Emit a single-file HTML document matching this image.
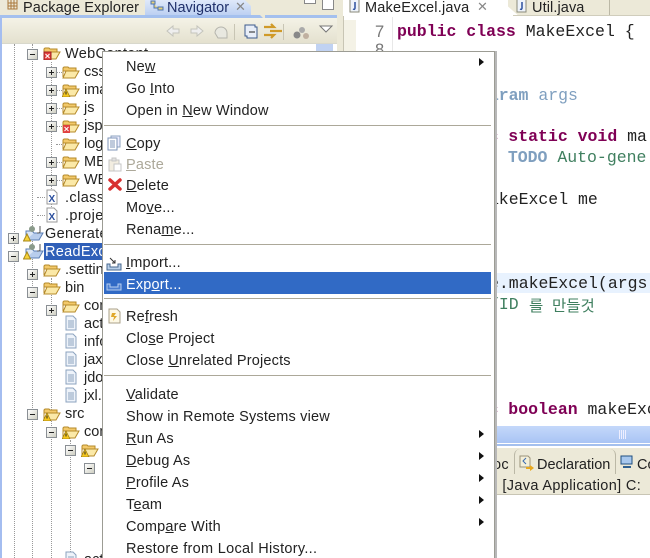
<!DOCTYPE html>
<html><head><meta charset="utf-8"><style>
html,body{margin:0;padding:0}
#p{position:relative;width:650px;height:558px;overflow:hidden;background:#fff;font-family:"Liberation Sans","Noto Sans CJK KR",sans-serif;font-size:14.5px;color:#222}
#p div,#p svg{position:absolute}
.t{white-space:nowrap;line-height:18px;height:18px;margin-top:1px}
.m{left:126px;white-space:nowrap;line-height:18px;height:18px;color:#222;letter-spacing:.18px;margin-top:1px}
.c{white-space:pre;font-family:"Liberation Mono","Noto Sans CJK KR",monospace;font-size:16.5px;line-height:20px;height:20px;color:#222;margin-top:1px}
.k{color:#7f0055;font-weight:bold}
.g{color:#3f7f5f}
.j{color:#7f9fbf}
.s{left:104px;width:387px;height:1px;background:#aca899}
.a{left:479px;width:0;height:0;border-left:5px solid #111;border-top:4px solid transparent;border-bottom:4px solid transparent}
.v{width:0;border-left:1px dotted #999}
.h{height:0;border-top:1px dotted #999}
.b{width:9px;height:9px;background:linear-gradient(135deg,#fff,#cfcfc2);border:1px solid #8a8f94}
.b:after{content:"";position:absolute;left:2px;top:4px;width:5px;height:1px;background:#222}
.b.q:before{content:"";position:absolute;left:4px;top:2px;width:1px;height:5px;background:#222}
u{text-decoration:underline}
</style></head><body><div id="p">
<svg width="0" height="0"><defs>
<symbol id="f" viewBox="0 0 18 14"><path d="M1 12V3l1-1h4l1 1h7v3H1z" fill="#f3c96a" stroke="#b58a2a"/><path d="M1 13l3-7h13l-4 7z" fill="#fbe9a8" stroke="#b58a2a"/></symbol>
<symbol id="w" viewBox="0 0 18 14"><path d="M1 12V3l1-1h4l1 1h7v3H1z" fill="#f3c96a" stroke="#b58a2a"/><path d="M1 13l3-7h13l-4 7z" fill="#fbe9a8" stroke="#b58a2a"/><path d="M4 6l4 8H0z" fill="#f6c81e" stroke="#9a7a10" stroke-width=".7"/><path d="M4 8.500v3" stroke="#222"/></symbol>
<symbol id="d" viewBox="0 0 14 16"><path d="M2 1h7l3 3v11H2z" fill="#eef3fa" stroke="#8ca3bf"/><path d="M4 6h6M4 8h6M4 10h6M4 12h6" stroke="#8ca3bf"/></symbol>
<symbol id="x" viewBox="0 0 14 16"><path d="M2 1h7l3 3v11H2z" fill="#fff" stroke="#9a9a9a"/><text x="3.500" y="13" font-size="10" font-weight="bold" fill="#2b4f9e" font-family="Liberation Sans">X</text></symbol>
<symbol id="pr" viewBox="0 0 22 18"><path d="M3 15l4-7h13l-4 7z" fill="#b8cdec" stroke="#5b7fb5"/><path d="M3 15V6h6l2 2" fill="#dbe6f5" stroke="#5b7fb5"/><circle cx="9" cy="4" r="3" fill="#8a9a8a"/><path d="M17 1v6q0 1-3 1" fill="none" stroke="#555"/><path d="M4 9l3.500 7h-7z" fill="#f6d23a" stroke="#a8891a"/></symbol>
</defs></svg>

<!-- left chrome -->
<div style="left:0;top:0;width:343px;height:15px;background:#ece9d8"></div>
<div style="left:0;top:15px;width:337px;height:3px;background:#a4c0ee"></div>
<div style="left:145px;top:0;width:106px;height:15px;background:linear-gradient(#dfe9fa,#bcd0f2)"></div>
<div style="left:245px;top:0;width:20px;height:18px;background:#ece9d8;clip-path:polygon(0 0,100% 0,100% 100%,90% 100%)"></div>
<svg style="left:7px;top:0" width="12" height="12"><path d="M1 0v9h9V0M4 0v9M7 0v9M1 3h9M1 6h9" fill="none" stroke="#a9783a"/></svg>
<div class="t" style="left:23px;top:-2px;letter-spacing:.1px">Package Explorer</div>
<svg style="left:149px;top:0" width="16" height="12"><path d="M2 1h4v3H2zM9 7h5v3H9zM5 4v4h4" fill="#e7d27a" stroke="#4d74b0"/></svg>
<div class="t" style="left:167px;top:-2px;color:#20306a">Navigator</div>
<div class="t" style="left:235px;top:-3px;color:#888;font-size:13px">✕</div>
<div style="left:304px;top:0;width:10px;height:3px;border:1px solid #888;border-top:0;background:#fff"></div>
<div style="left:322px;top:0;width:10px;height:9px;border:1px solid #888;border-top:0;background:#fff"></div>
<div style="left:2px;top:18px;width:335px;height:25px;background:linear-gradient(#f4f2e6,#e4e1cf)"></div>
<svg style="left:164px;top:22px" width="175" height="20">
<path d="M3 9l6-5v3h6v4H9v3z" fill="#eee" stroke="#c4c4bc"/>
<path d="M39 9l-6-5v3h-6v4h6v3z" fill="#eee" stroke="#c4c4bc"/>
<path d="M51 11a6 6 0 1 1 12 0v5h-9z" fill="#e8e8e0" stroke="#b4b4ac"/>
<path d="M70.500 2v16" stroke="#c8c5b4"/>
<path d="M81 3h10v2h2v11H83v-2h-2z" fill="#e8eef8" stroke="#3c5a8c"/><path d="M85 10h6" stroke="#222"/>
<path d="M100 5h10l-3-3M118 9H106M100 13h10l-3 3" fill="none" stroke="#d09a28" stroke-width="2.200"/>
<path d="M119.500 2v16" stroke="#c8c5b4"/>
<circle cx="138" cy="8" r="3" fill="#aaa"/><circle cx="133" cy="13" r="3.500" fill="#888"/><circle cx="142" cy="14" r="3" fill="#c0b0a0"/>
<path d="M156 4h12l-6 6z" fill="#fff" stroke="#777"/>
</svg>
<div style="left:2px;top:43px;width:335px;height:1px;background:#d8d8cc"></div>
<div style="left:0;top:18px;width:2px;height:540px;background:#a4bdf0"></div>
<div style="left:316px;top:44px;width:17px;height:20px;background:#c0d2f2"></div>
<div style="left:337px;top:0;width:6px;height:558px;background:#ece9d8"></div>

<!-- tree lines -->
<div class="v" style="left:14px;top:44px;height:514px"></div>
<div class="v" style="left:32px;top:44px;height:514px"></div>
<div class="v" style="left:51px;top:62px;height:145px"></div>
<div class="v" style="left:51px;top:278px;height:280px"></div>
<div class="h" style="left:37px;top:197px;width:8px"></div>
<div class="h" style="left:37px;top:215px;width:8px"></div>
<div class="h" style="left:56px;top:72px;width:6px"></div>
<div class="h" style="left:56px;top:90px;width:6px"></div>
<div class="h" style="left:56px;top:108px;width:6px"></div>
<div class="h" style="left:56px;top:126px;width:6px"></div>
<div class="h" style="left:56px;top:144px;width:6px"></div>
<div class="h" style="left:56px;top:162px;width:6px"></div>
<div class="h" style="left:56px;top:180px;width:6px"></div>
<div class="v" style="left:70px;top:440px;height:118px"></div>

<div class="b" style="left:27px;top:49px"></div>
<svg style="left:43px;top:46px" width="18" height="14"><use href="#f"/><rect x="1" y="6" width="7" height="8" fill="#e04040" stroke="#a02020"/><path d="M2.500 8l4 4M6.500 8l-4 4" stroke="#fff"/></svg>
<div class="t" style="left:65px;top:44px;letter-spacing:.3px">WebContent</div>

<div class="b q" style="left:46px;top:67px"></div><svg style="left:62px;top:65px" width="18" height="14"><use href="#f"/></svg><div class="t" style="left:84px;top:62px">css</div>
<div class="b q" style="left:46px;top:85px"></div><svg style="left:62px;top:83px" width="18" height="14"><use href="#w"/></svg><div class="t" style="left:84px;top:80px">images</div>
<div class="b q" style="left:46px;top:103px"></div><svg style="left:62px;top:101px" width="18" height="14"><use href="#f"/></svg><div class="t" style="left:84px;top:98px">js</div>
<div class="b q" style="left:46px;top:121px"></div><svg style="left:62px;top:119px" width="18" height="14"><use href="#f"/><rect x="1" y="6" width="7" height="8" fill="#e04040"/><path d="M2.500 8l4 4M6.500 8l-4 4" stroke="#fff"/></svg><div class="t" style="left:84px;top:116px">jsp</div>
<svg style="left:62px;top:137px" width="18" height="14"><use href="#f"/></svg><div class="t" style="left:84px;top:134px">logs</div>
<div class="b q" style="left:46px;top:157px"></div><svg style="left:62px;top:155px" width="18" height="14"><use href="#f"/></svg><div class="t" style="left:84px;top:152px">META</div>
<div class="b q" style="left:46px;top:175px"></div><svg style="left:62px;top:173px" width="18" height="14"><use href="#f"/></svg><div class="t" style="left:84px;top:170px">WEB</div>
<svg style="left:45px;top:189px" width="14" height="16"><use href="#x"/></svg><div class="t" style="left:65px;top:188px;letter-spacing:.4px">.classpath</div>
<svg style="left:45px;top:207px" width="14" height="16"><use href="#x"/></svg><div class="t" style="left:65px;top:206px;letter-spacing:.4px">.project</div>

<div class="b q" style="left:8px;top:233px"></div><svg style="left:23px;top:225px" width="22" height="18"><use href="#pr"/></svg><div class="t" style="left:45px;top:224px;letter-spacing:.3px">Generate</div>
<div class="b" style="left:8px;top:251px"></div><svg style="left:23px;top:243px" width="22" height="18"><use href="#pr"/></svg>
<div class="t" style="left:44px;top:242px;width:62px;height:17px;background:#2f5fb8;color:#fff;padding-left:1px;letter-spacing:.3px;overflow:hidden">ReadExcel</div>
<div class="b q" style="left:27px;top:269px"></div><svg style="left:43px;top:263px" width="18" height="14"><use href="#f"/></svg><div class="t" style="left:65px;top:260px">.settings</div>
<div class="b" style="left:27px;top:287px"></div><svg style="left:43px;top:281px" width="18" height="14"><use href="#f"/></svg><div class="t" style="left:65px;top:278px">bin</div>
<div class="b q" style="left:46px;top:305px"></div><svg style="left:62px;top:299px" width="18" height="14"><use href="#f"/></svg><div class="t" style="left:84px;top:296px">com</div>
<svg style="left:64px;top:315px" width="14" height="16"><use href="#d"/></svg><div class="t" style="left:84px;top:314px">action</div>
<svg style="left:64px;top:333px" width="14" height="16"><use href="#d"/></svg><div class="t" style="left:84px;top:332px">info</div>
<svg style="left:64px;top:351px" width="14" height="16"><use href="#d"/></svg><div class="t" style="left:84px;top:350px">jax</div>
<svg style="left:64px;top:369px" width="14" height="16"><use href="#d"/></svg><div class="t" style="left:84px;top:368px">jdo</div>
<svg style="left:64px;top:387px" width="14" height="16"><use href="#d"/></svg><div class="t" style="left:84px;top:386px">jxl.</div>
<div class="b" style="left:27px;top:409px"></div><svg style="left:43px;top:407px" width="18" height="14"><use href="#w"/></svg><div class="t" style="left:65px;top:404px">src</div>
<div class="b" style="left:46px;top:427px"></div><svg style="left:62px;top:425px" width="18" height="14"><use href="#w"/></svg><div class="t" style="left:84px;top:422px">com</div>
<div class="b" style="left:65px;top:445px"></div><svg style="left:81px;top:443px" width="18" height="14"><use href="#w"/></svg>
<div class="b" style="left:84px;top:463px"></div>
<svg style="left:64px;top:551px" width="14" height="16"><use href="#d"/></svg><div class="t" style="left:84px;top:550px">action</div>

<!-- editor -->
<div style="left:343px;top:0;width:307px;height:15px;background:#ece9d8"></div>
<div style="left:343px;top:0;width:165px;height:17px;background:#fff"></div>
<div style="left:490px;top:0;width:30px;height:17px;background:#fff;clip-path:polygon(0 0,35% 0,100% 100%,0 100%)"></div>
<div style="left:513px;top:15px;width:137px;height:1px;background:#d0cdbc"></div>
<svg style="left:349px;top:0" width="12" height="13"><path d="M1 0v12h9V0" fill="#eef3fa" stroke="#8a8a7a"/><path d="M6 2v6q0 2-2 1" fill="none" stroke="#2b4f9e" stroke-width="1.500"/></svg>
<div class="t" style="left:365px;top:-2px;letter-spacing:.2px">MakeExcel.java</div>
<div class="t" style="left:477px;top:-3px;color:#888;font-size:13px">✕</div>
<svg style="left:516px;top:0" width="12" height="13"><path d="M1 0v12h9V0" fill="#eef3fa" stroke="#8a8a7a"/><path d="M6 2v6q0 2-2 1" fill="none" stroke="#2b4f9e" stroke-width="1.500"/></svg>
<div class="t" style="left:532px;top:-2px;letter-spacing:.1px">Util.java</div>
<div style="left:609px;top:0;width:1px;height:15px;background:#bbb8a6"></div>
<div style="left:343px;top:16px;width:1px;height:410px;background:#c8c5b4"></div>
<div style="left:344px;top:20px;width:12px;height:406px;background:#f4f2e6"></div>
<div style="left:392px;top:17px;width:1px;height:409px;background:#e8e8e8"></div>
<div class="c" style="left:375px;top:21px;color:#777;font-family:'Liberation Sans'">7</div>
<div class="c" style="left:375px;top:39px;color:#777;font-family:'Liberation Sans'">8</div>
<div class="c" style="left:397px;top:21px"><span class="k">public class</span> MakeExcel {</div>
<div class="c j" style="left:469px;top:85px"><b>@param</b> args</div>
<div class="c" style="left:439px;top:126px"><span class="k">public static void</span> ma</div>
<div class="c g" style="left:488px;top:147px">/ <b class="j">TODO</b> Auto-gene</div>
<div class="c" style="left:479px;top:189px">MakeExcel me</div>
<div style="left:343px;top:273px;width:307px;height:20px;background:#e8f2fe"></div>
<div class="c" style="left:489px;top:273px">e.makeExcel(args</div>
<div class="c g" style="left:489px;top:294px">/ID</div>
<div class="c g" style="left:529px;top:294px;font-size:15.500px;font-family:'Noto Sans CJK KR',sans-serif">를</div>
<div class="c g" style="left:552px;top:294px;font-size:15.500px;font-family:'Noto Sans CJK KR',sans-serif">만들것</div>
<div class="c" style="left:439px;top:399px"><span class="k">public boolean</span> makeExcel</div>
<div style="left:343px;top:426px;width:307px;height:17px;background:linear-gradient(#c4d8fa,#a9c4f4);border-bottom:1px solid #fff"></div>
<svg style="left:618px;top:430px" width="10" height="9"><path d="M1.500 0v9M3.500 0v9M5.500 0v9M7.500 0v9" stroke="#eef" /></svg>
<div style="left:343px;top:444px;width:307px;height:2px;background:#a4c0ee"></div>
<div style="left:343px;top:446px;width:307px;height:2px;background:#fff"></div>
<div style="left:343px;top:448px;width:307px;height:27px;background:#ece9d8"></div>
<div style="left:343px;top:475px;width:307px;height:19px;background:#ece9d8;border-bottom:1px solid #c8c5b4"></div>
<div class="t" style="left:493px;top:455px;letter-spacing:.3px">oc</div>
<div style="left:514px;top:449px;width:100px;height:25px;border-left:1px solid #bbb8a6;border-right:1px solid #bbb8a6;border-radius:6px 6px 0 0"></div>
<svg style="left:518px;top:455px" width="16" height="16"><path d="M2 1h8l2 2v9H2z" fill="#f4efd8" stroke="#9a927a"/><path d="M8 3L5 6l3 3" fill="none" stroke="#3a6ab0"/><path d="M8 12h4v-2l4 3-4 3v-2H8z" fill="#e8a820"/></svg>
<div class="t" style="left:537px;top:455px">Declaration</div>
<svg style="left:620px;top:455px" width="14" height="14"><rect x="1" y="1" width="11" height="8" fill="#a8c8ee" stroke="#1f4f80"/><path d="M3 11h8v2H3z" fill="#2f6090"/></svg>
<div class="t" style="left:637px;top:455px">Co</div>
<div class="t" style="left:486px;top:476px;letter-spacing:.35px">el [Java Application] C:</div>

<!-- menu -->
<div style="left:494px;top:51px;width:3px;height:507px;background:#b8b8b8"></div>
<div style="left:102px;top:51px;width:391px;height:507px;background:#fff;border:1px solid #9c9c94;border-bottom:0"></div>
<div style="left:104px;top:272px;width:387px;height:22px;background:#316ac5"></div>
<div class="m" style="top:57px">Ne<u>w</u></div>
<div class="m" style="top:79px">Go <u>I</u>nto</div>
<div class="m" style="top:101px">Open in <u>N</u>ew Window</div>
<div class="s" style="top:125px"></div>
<div class="m" style="top:134px"><u>C</u>opy</div>
<div class="m" style="top:155px;color:#aca899"><u>P</u>aste</div>
<div class="m" style="top:176px"><u>D</u>elete</div>
<div class="m" style="top:198px">Mo<u>v</u>e...</div>
<div class="m" style="top:220px">Rena<u>m</u>e...</div>
<div class="s" style="top:244px"></div>
<div class="m" style="top:253px"><u>I</u>mport...</div>
<div class="m" style="top:275px;color:#fff">Exp<u>o</u>rt...</div>
<div class="s" style="top:298px"></div>
<div class="m" style="top:307px">Re<u>f</u>resh</div>
<div class="m" style="top:329px">Clo<u>s</u>e Project</div>
<div class="m" style="top:351px">Close <u>U</u>nrelated Projects</div>
<div class="s" style="top:375px"></div>
<div class="m" style="top:385px"><u>V</u>alidate</div>
<div class="m" style="top:407px">Show in Remote Systems view</div>
<div class="m" style="top:429px"><u>R</u>un As</div>
<div class="m" style="top:451px"><u>D</u>ebug As</div>
<div class="m" style="top:473px"><u>P</u>rofile As</div>
<div class="m" style="top:495px">T<u>e</u>am</div>
<div class="m" style="top:517px">Comp<u>a</u>re With</div>
<div class="m" style="top:539px;letter-spacing:.3px">Restore from Local History...</div>
<div class="a" style="top:58px"></div>
<div class="a" style="top:430px"></div>
<div class="a" style="top:452px"></div>
<div class="a" style="top:474px"></div>
<div class="a" style="top:496px"></div>
<div class="a" style="top:518px"></div>
<!-- menu icons -->
<svg style="left:106px;top:135px" width="16" height="16"><path d="M5 1h9v11H5z" fill="#eef" stroke="#8ca3bf"/><path d="M2 3h9v12H2z" fill="#fff" stroke="#7f96b8"/><path d="M4 6h5M4 8h5M4 10h5M4 12h5" stroke="#7f96b8"/></svg>
<svg style="left:108px;top:157px" width="14" height="15" opacity=".55"><path d="M1 3h10v11H1z" fill="#e8e0c8" stroke="#999"/><path d="M4 1h4v3H4z" fill="#ccc" stroke="#999"/><path d="M6 7h7v7H6z" fill="#fff" stroke="#999"/></svg>
<svg style="left:108px;top:178px" width="14" height="13"><path d="M2 2l10 9M12 2L2 11" stroke="#d83030" stroke-width="3.500" stroke-linecap="round"/></svg>
<svg style="left:106px;top:257px" width="16" height="14"><path d="M1 7v6h14V7h-3v3H4V7z" fill="#b8cfe8" stroke="#49698f"/><path d="M4 1l5 5M9 3v3H6" fill="none" stroke="#333"/></svg>
<svg style="left:106px;top:278px" width="16" height="13"><path d="M1 6v6h14V6h-3v3H4V6z" fill="#4d7fd0" stroke="#b8cff0"/></svg>
<svg style="left:107px;top:308px" width="14" height="16"><path d="M2 1h8l3 3v11H2z" fill="#fdf8e4" stroke="#aaa08a"/><path d="M5 5h4l-2 3h3l-4 5 1-4H4z" fill="#e0a828"/></svg>
</div></body></html>
